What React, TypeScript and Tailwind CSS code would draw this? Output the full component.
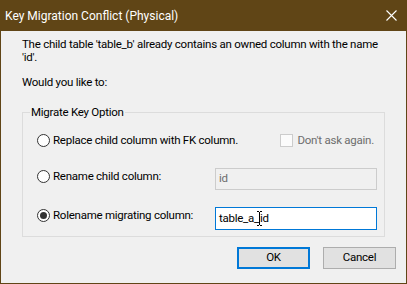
import React from "react";

const font = { fontFamily: 'Roboto, "Noto Sans", Arial, sans-serif' };

function Radio({ checked = false }: { checked?: boolean }) {
  return (
    <span className="flex h-[13px] w-[13px] shrink-0 items-center justify-center rounded-full border border-[#333333] bg-white">
      {checked ? <span className="h-[7px] w-[7px] rounded-full bg-[#333333]" /> : null}
    </span>
  );
}

export default function App() {
  return (
    <div
      className="flex h-[284px] w-[407px] flex-col whitespace-nowrap border border-[#604516] bg-[#f0f0f0] text-[11.5px] tracking-[-0.25px] text-black"
      style={font}
    >
      <div className="flex h-[30px] shrink-0 items-center justify-between bg-[#604516] pl-[4px] pr-[9px] text-[12px] tracking-normal text-white">
        <span>Key Migration Conflict (Physical)</span>
        <svg width="11" height="11" viewBox="0 0 11 11" className="mb-[1px]">
          <path d="M0.5 0.5 L10.5 10.5 M10.5 0.5 L0.5 10.5" stroke="white" strokeWidth="1.1" />
        </svg>
      </div>

      <div className="flex flex-1 flex-col px-[21px]">
        <p className="mt-[7px] leading-[13px]">
          The child table 'table_b' already contains an owned column with the name
          <br />
          'id'.
        </p>
        <p className="mt-[12px] leading-[13px]">Would you like to:</p>

        <fieldset className="mt-[15px] h-[133px] border border-[#dcdcdc] pl-[14px] pr-[7px]">
          <legend className="ml-[-7px] px-[1px] leading-[16px]">Migrate Key Option</legend>

          <div className="mt-[13px] flex items-center">
            <Radio />
            <span className="ml-[3px] leading-[14px]">Replace child column with FK column.</span>
            <span className="ml-auto mr-[3px] flex items-center text-[#6d6d6d]">
              <span className="h-[13px] w-[13px] border border-[#cccccc] bg-[#fbfbfb]" />
              <span className="ml-[4px] leading-[14px]">Don't ask again.</span>
            </span>
          </div>

          <div className="mt-[21px] flex items-start">
            <div className="mt-[1px] flex items-center">
              <Radio />
              <span className="ml-[3px] leading-[14px]">Rename child column:</span>
            </div>
            <div className="ml-auto flex h-[22px] w-[162px] items-center border border-[#cccccc] bg-[#f0f0f0] px-[3px] text-[#6d6d6d]">
              id
            </div>
          </div>

          <div className="mt-[17px] flex items-start">
            <div className="mt-[1px] flex items-center">
              <Radio checked />
              <span className="ml-[3px] leading-[14px]">Rolename migrating column:</span>
            </div>
            <div className="ml-auto flex h-[23px] w-[162px] items-center border border-[#0078d7] bg-white px-[3px]">
              table_a_
              <svg width="5" height="15" viewBox="0 0 5 15" className="mx-[-2px]">
                <path d="M0 0.5 H2 M3 0.5 H5 M2.5 1 V14 M0 14.5 H2 M3 14.5 H5" stroke="#000" strokeWidth="1" />
              </svg>
              id
            </div>
          </div>
        </fieldset>

        <div className="mr-[-11px] mt-[10px] flex justify-end gap-[13px]">
          <button className="h-[22px] w-[73px] border-2 border-[#0078d7] bg-[#e1e1e1] leading-none">
            OK
          </button>
          <button className="h-[22px] w-[73px] border border-[#adadad] bg-[#e1e1e1] leading-none">
            Cancel
          </button>
        </div>
      </div>
    </div>
  );
}
